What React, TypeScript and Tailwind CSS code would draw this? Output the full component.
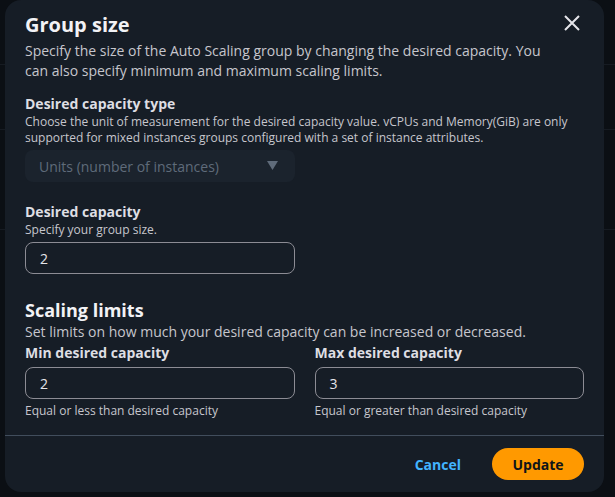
export default function App() {
  return (
    <div
      className="relative h-[497px] w-[615px] overflow-hidden bg-[#0b0f14]"
      style={{ fontFamily: '"Open Sans", "Noto Sans", sans-serif' }}
    >
      {/* faint page behind the overlay */}
      <div className="absolute inset-0 flex flex-col">
        <div className="h-[65px] border-b border-[#161b22]" />
        <div className="h-[65px] border-b border-[#161b22]" />
        <div className="h-[100px] border-b border-[#161b22]" />
      </div>

      <div className="absolute left-[5px] top-0 flex h-[492px] w-[599px] flex-col rounded-2xl bg-[#161d26] text-[#c6c6cd]">
        <div className="flex-1 px-5 pt-[11px]">
          <div className="flex items-start justify-between">
            <div className="w-[530px]">
              <h1 className="text-[20px] font-bold leading-[28px] text-[#f2f2f5]">Group size</h1>
              <p className="mt-[2px] text-[14px] leading-[20px]">
                Specify the size of the Auto Scaling group by changing the desired capacity. You
                can also specify minimum and maximum scaling limits.
              </p>
            </div>
            <button type="button" className="mr-[2px] mt-[2px] text-[#e5e5ea]" aria-label="Close">
              <svg width="20" height="20" viewBox="0 0 20 20" fill="none">
                <path d="M3 3l14 14M17 3L3 17" stroke="currentColor" strokeWidth="2" />
              </svg>
            </button>
          </div>

          <div className="mt-[13px]">
            <div className="text-[14px] font-bold leading-[20px] text-[#dedee3]">
              Desired capacity type
            </div>
            <p className="text-[12px] leading-[16px]">
              Choose the unit of measurement for the desired capacity value. vCPUs and Memory(GiB) are only
              supported for mixed instances groups configured with a set of instance attributes.
            </p>
            <div className="mt-[4px] flex h-[32px] w-[270px] items-center justify-between rounded-lg bg-[#1b232d] pl-[14px] pr-[17px] text-[14px] text-[#5f6b7a]">
              <span>Units (number of instances)</span>
              <svg width="11" height="10" viewBox="0 0 11 10">
                <path d="M0 0h11L5.5 9z" fill="#5f6b7a" />
              </svg>
            </div>
          </div>

          <div className="mt-[20px]">
            <div className="text-[14px] font-bold leading-[20px] text-[#dedee3]">Desired capacity</div>
            <div className="text-[12px] leading-[16px]">Specify your group size.</div>
            <div className="mt-[4px] flex h-[32px] w-[270px] items-center rounded-lg border border-[#8c8c94] px-[14px] text-[14px] text-[#e5e5ea]">
              2
            </div>
          </div>

          <h2 className="mt-[24px] text-[18px] font-bold leading-[24px] text-[#f2f2f5]">Scaling limits</h2>
          <p className="text-[14px] leading-[20px]">
            Set limits on how much your desired capacity can be increased or decreased.
          </p>

          <div className="mt-[1px] grid grid-cols-2 gap-5">
            <div>
              <div className="text-[14px] font-bold leading-[20px] text-[#dedee3]">Min desired capacity</div>
              <div className="mt-[4px] flex h-[32px] items-center rounded-lg border border-[#8c8c94] px-[14px] text-[14px] text-[#e5e5ea]">
                2
              </div>
              <div className="mt-[4px] text-[12px] leading-[16px]">Equal or less than desired capacity</div>
            </div>
            <div>
              <div className="text-[14px] font-bold leading-[20px] text-[#dedee3]">Max desired capacity</div>
              <div className="mt-[4px] flex h-[32px] items-center rounded-lg border border-[#8c8c94] px-[14px] text-[14px] text-[#e5e5ea]">
                3
              </div>
              <div className="mt-[4px] text-[12px] leading-[16px]">Equal or greater than desired capacity</div>
            </div>
          </div>
        </div>

        <div className="flex h-[57px] items-center justify-end gap-[31px] border-t border-[#414d5c] px-5">
          <button type="button" className="text-[14px] font-bold text-[#42b4ff]">
            Cancel
          </button>
          <button
            type="button"
            className="h-[32px] w-[92px] rounded-full bg-[#ff9900] text-[14px] font-bold text-[#0f141a]"
          >
            Update
          </button>
        </div>
      </div>
    </div>
  );
}
